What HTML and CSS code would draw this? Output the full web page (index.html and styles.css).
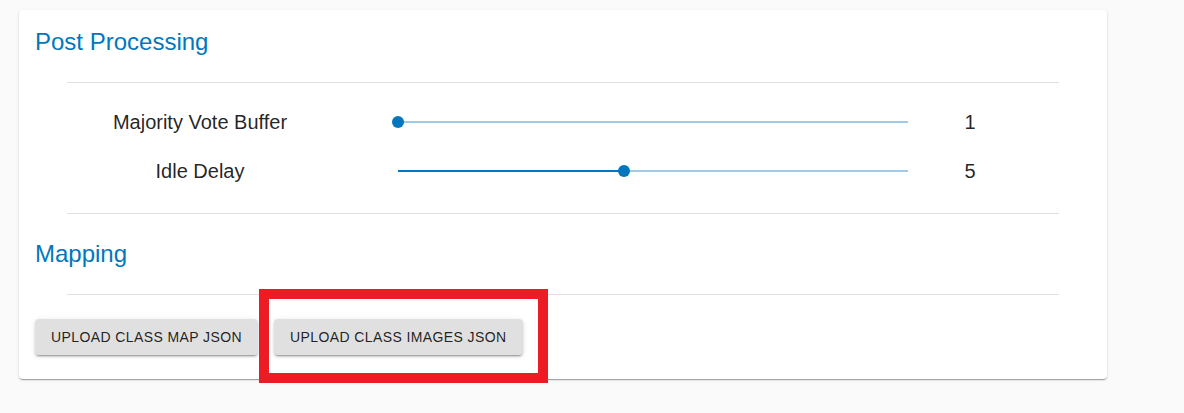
FILE: index.html
```html
<!DOCTYPE html>
<html>
<head>
<meta charset="utf-8">
<link rel="stylesheet" href="styles.css">
</head>
<body>
<div class="page">
  <div class="card">
    <h2 class="section-title">Post Processing</h2>
    <hr class="divider">
    <div class="rows">
      <div class="row">
        <div class="label">Majority Vote Buffer</div>
        <div class="slider">
          <div class="track"></div>
          <div class="track-active" style="width:0%"></div>
          <div class="thumb" style="left:0%"></div>
        </div>
        <div class="value">1</div>
      </div>
      <div class="row">
        <div class="label">Idle Delay</div>
        <div class="slider">
          <div class="track"></div>
          <div class="track-active" style="width:44.4%"></div>
          <div class="thumb" style="left:44.4%"></div>
        </div>
        <div class="value">5</div>
      </div>
    </div>
    <hr class="divider divider-flush">
    <h2 class="section-title mapping">Mapping</h2>
    <hr class="divider divider-map">
    <div class="buttons">
      <button class="btn">Upload Class Map JSON</button>
      <button class="btn">Upload Class Images JSON</button>
    </div>
  </div>
  <div class="highlight"></div>
</div>
</body>
</html>
```
FILE: styles.css
```css
html, body {
  margin: 0;
  padding: 0;
  background: #fafafa;
  font-family: "Liberation Sans", Arial, sans-serif;
}

.page {
  position: relative;
  padding: 10px 0 0 19px;
  height: 403px;
}

.card {
  width: 1088px;
  box-sizing: border-box;
  background: #fff;
  border-radius: 4px;
  box-shadow: 0px 2px 1px -1px rgba(0,0,0,0.2), 0px 1px 1px 0px rgba(0,0,0,0.14), 0px 1px 3px 0px rgba(0,0,0,0.12);
  padding: 16px 16px 24px 16px;
}

.section-title {
  margin: 0;
  font-weight: 400;
  font-size: 24px;
  line-height: 32px;
  color: #0277bd;
}

.section-title.mapping {
  margin-top: 24px;
}

.divider {
  margin: 24px 32px 0 32px;
  border: none;
  height: 1px;
  background: #e0e0e0;
}

.divider-flush {
  margin-top: 0;
}

.divider-map {
  margin-top: 24px;
}

.rows {
  margin: 0 32px;
  padding: 15px 0 17px 0;
}

.row {
  display: flex;
  align-items: center;
  height: 49px;
}

.label {
  width: 266px;
  text-align: center;
  font-size: 20px;
  color: rgba(0,0,0,0.87);
}

.slider {
  position: relative;
  margin-left: 65px;
  width: 510px;
  height: 12px;
  top: -1px;
}

.track {
  position: absolute;
  left: 0;
  right: 0;
  top: 5px;
  height: 2px;
  background: #a0cbe6;
}

.track-active {
  position: absolute;
  left: 0;
  top: 5px;
  height: 2px;
  background: #0277bd;
}

.thumb {
  position: absolute;
  top: 0;
  width: 12px;
  height: 12px;
  margin-left: -6px;
  border-radius: 50%;
  background: #0277bd;
}

.value {
  width: 124px;
  text-align: center;
  font-size: 20px;
  color: rgba(0,0,0,0.87);
}

.buttons {
  display: flex;
  gap: 16px;
  margin-top: 24px;
}

.btn {
  height: 36px;
  padding: 0 16px;
  border: none;
  border-radius: 4px;
  background: #e0e0e0;
  color: rgba(0,0,0,0.87);
  font-family: "Liberation Sans", Arial, sans-serif;
  font-size: 14px;
  letter-spacing: 0.4px;
  text-transform: uppercase;
  box-shadow: 0px 3px 1px -2px rgba(0,0,0,0.2), 0px 2px 2px 0px rgba(0,0,0,0.14), 0px 1px 5px 0px rgba(0,0,0,0.12);
}

.highlight {
  position: absolute;
  left: 259px;
  top: 289px;
  width: 289px;
  height: 94px;
  box-sizing: border-box;
  border: 10px solid #ed1c24;
}
```
